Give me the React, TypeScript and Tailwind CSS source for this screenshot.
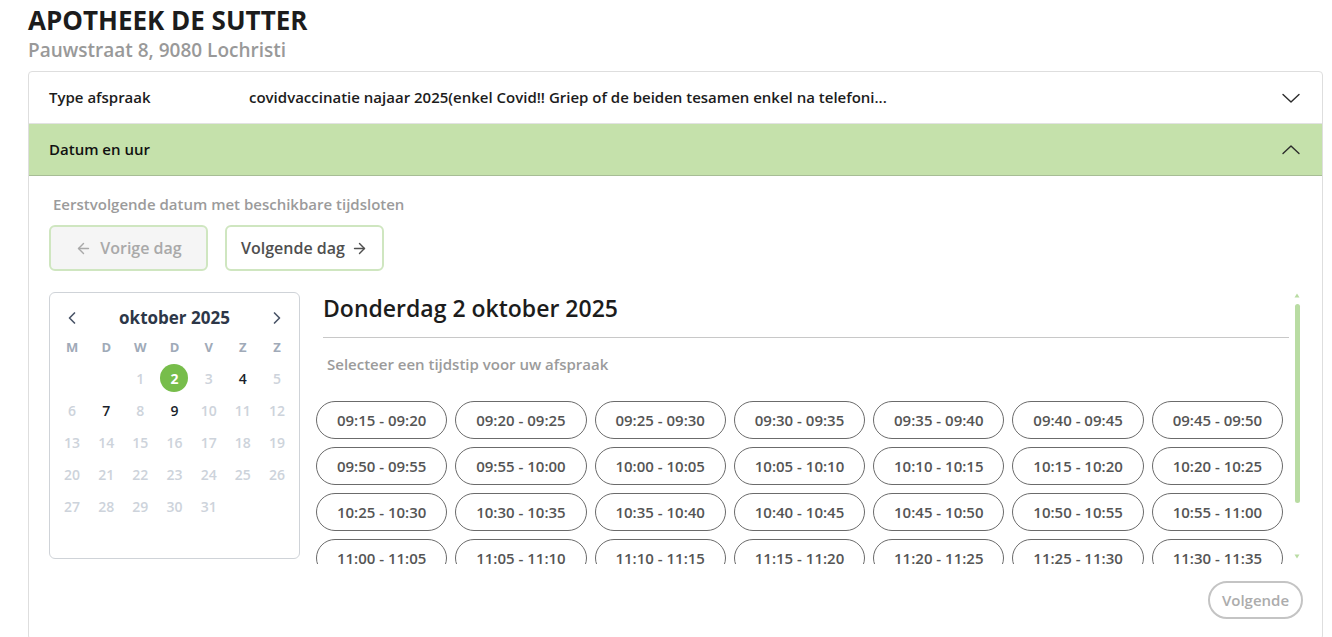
import React from "react";
import { ArrowLeft, ArrowRight, ChevronLeft, ChevronRight } from "lucide-react";

function ChevronDown() {
  return (
    <svg width="18" height="10" viewBox="0 0 18 10" fill="none" stroke="#2b2b2b" strokeWidth="1.4" strokeLinecap="round" strokeLinejoin="round">
      <path d="M1 1.5l8 7.5 8-7.5" />
    </svg>
  );
}
function ChevronUp() {
  return (
    <svg width="18" height="10" viewBox="0 0 18 10" fill="none" stroke="#2b2b2b" strokeWidth="1.4" strokeLinecap="round" strokeLinejoin="round">
      <path d="M1 8.5l8-7.5 8 7.5" />
    </svg>
  );
}

const pad = (n: number) => (n < 10 ? "0" + n : "" + n);
const fmt = (m: number) => pad(Math.floor(m / 60)) + ":" + pad(m % 60);
const slots: string[] = [];
for (let m = 9 * 60 + 15; m < 9 * 60 + 15 + 28 * 5; m += 5) {
  slots.push(fmt(m) + " - " + fmt(m + 5));
}

const weekdays = ["M", "D", "W", "D", "V", "Z", "Z"];
const enabled = [4, 7, 9];

export default function App() {
  const days: (number | null)[] = [null, null];
  for (let d = 1; d <= 31; d++) days.push(d);

  return (
    <div className="w-[1332px] h-[637px] overflow-hidden bg-white pl-[28px] pr-[9px] font-['Open_Sans',sans-serif]">
      <h1 className="pt-[3px] text-[26px] leading-[35px] font-bold text-[#1c1c1c]">APOTHEEK DE SUTTER</h1>
      <div className="text-[19px] leading-[24px] font-semibold text-[#999999]">Pauwstraat 8, 9080 Lochristi</div>
      <div className="mt-[9px] border border-[#dedede] rounded-[4px]">
        <div className="h-[52px] flex items-center pl-[20px] pr-[22px] border-b border-[#e2e2e2]">
          <div className="w-[200px] shrink-0 text-[15px] font-semibold text-[#1c1c1c]">Type afspraak</div>
          <div className="flex-1 min-w-0 text-[15px] font-semibold text-[#1c1c1c] whitespace-nowrap">
            covidvaccinatie najaar 2025(enkel Covid!! Griep of de beiden tesamen enkel na telefoni...
          </div>
          <ChevronDown />
        </div>
        <div className="h-[52px] flex items-center pl-[20px] pr-[22px] bg-[#c5e1ab] border-b border-[#a7bd95]">
          <div className="flex-1 text-[15px] font-semibold text-[#111111]">Datum en uur</div>
          <ChevronUp />
        </div>
        <div className="pl-[20px] pr-[19px] pt-[18px] pb-[20px]">
          <p className="pl-[4px] text-[15px] leading-[20px] font-semibold text-[#9b9b9b]">
            Eerstvolgende datum met beschikbare tijdsloten
          </p>
          <div className="flex gap-[17px] mt-[11px]">
            <button className="h-[46px] w-[159px] flex items-center justify-center gap-[8px] rounded-[6px] border-2 border-[#cfe6c0] bg-[#f5f5f5] text-[16px] font-semibold text-[#a9a9a9]">
              <ArrowLeft size={17} strokeWidth={2} />
              Vorige dag
            </button>
            <button className="h-[46px] w-[159px] flex items-center justify-center gap-[6px] rounded-[6px] border-2 border-[#cfe6c0] bg-white text-[16px] font-semibold text-[#4f4f4f]">
              Volgende dag
              <ArrowRight size={17} strokeWidth={2} />
            </button>
          </div>

          <div className="flex mt-[21px]">
            <div className="w-[251px] h-[267px] shrink-0 border border-[#cfd3d8] rounded-[6px] px-[5px] pt-[10px]">
              <div className="grid grid-cols-7 h-[30px] items-center">
                <div className="flex justify-center text-[#4a5568]"><ChevronLeft size={20} strokeWidth={2} /></div>
                <div className="col-span-5 text-center text-[17px] font-bold text-[#2d3748]">oktober 2025</div>
                <div className="flex justify-center text-[#4a5568]"><ChevronRight size={20} strokeWidth={2} /></div>
              </div>
              <div className="grid grid-cols-7 h-[29px] items-center">
                {weekdays.map((w, i) => (
                  <div key={i} className="text-center text-[13px] font-bold text-[#a0aab8]">{w}</div>
                ))}
              </div>
              <div className="grid grid-cols-7">
                {days.map((d, i) => (
                  <div key={i} className="h-[32px] flex items-center justify-center">
                    {d === 2 ? (
                      <span className="w-[28px] h-[28px] rounded-full bg-[#77bd4b] text-white text-[14px] font-bold flex items-center justify-center">2</span>
                    ) : d ? (
                      <span className={"text-[14px] font-semibold " + (enabled.includes(d) ? "text-[#1a1f2b]" : "text-[#cdd3db]")}>{d}</span>
                    ) : null}
                  </div>
                ))}
              </div>
            </div>

            <div className="ml-[16px] flex-1 h-[272px] flex">
              <div className="flex-1 overflow-hidden">
                <div className="ml-[7px] mr-[2px] pb-[13px] border-b border-[#c8c8c8]">
                  <h2 className="text-[23px] leading-[32px] font-semibold text-[#1c1c1c]">Donderdag 2 oktober 2025</h2>
                </div>
                <p className="ml-[11px] mt-[16px] text-[15px] leading-[20px] font-semibold text-[#9b9b9b]">
                  Selecteer een tijdstip voor uw afspraak
                </p>
                <div className="mt-[27px] mr-[8px] grid grid-cols-7 gap-[8px]">
                  {slots.map((s) => (
                    <div key={s} className="h-[38px] rounded-full border border-[#6b6b6b] flex items-center justify-center text-[15px] font-semibold text-[#555555]">
                      {s}
                    </div>
                  ))}
                </div>
              </div>
              <div className="w-[12px] flex flex-col items-center pt-[1px]">
                <svg width="6" height="5" viewBox="0 0 6 5"><path d="M3 0.5L5.5 4.5H0.5Z" fill="#b9dca3" /></svg>
                <div className="mt-[6px] w-[5px] h-[199px] rounded-full bg-[#b9dca3]" />
                <div className="flex-1" />
                <svg width="6" height="5" viewBox="0 0 6 5" className="mb-[5px]"><path d="M0.5 0.5H5.5L3 4.5Z" fill="#b9dca3" /></svg>
              </div>
            </div>
          </div>

          <div className="flex justify-end mt-[17px]">
            <button className="h-[38px] w-[95px] rounded-full border-2 border-[#c4c4c4] text-[15px] font-semibold text-[#acacac] flex items-center justify-center">
              Volgende
            </button>
          </div>
        </div>
      </div>
    </div>
  );
}
